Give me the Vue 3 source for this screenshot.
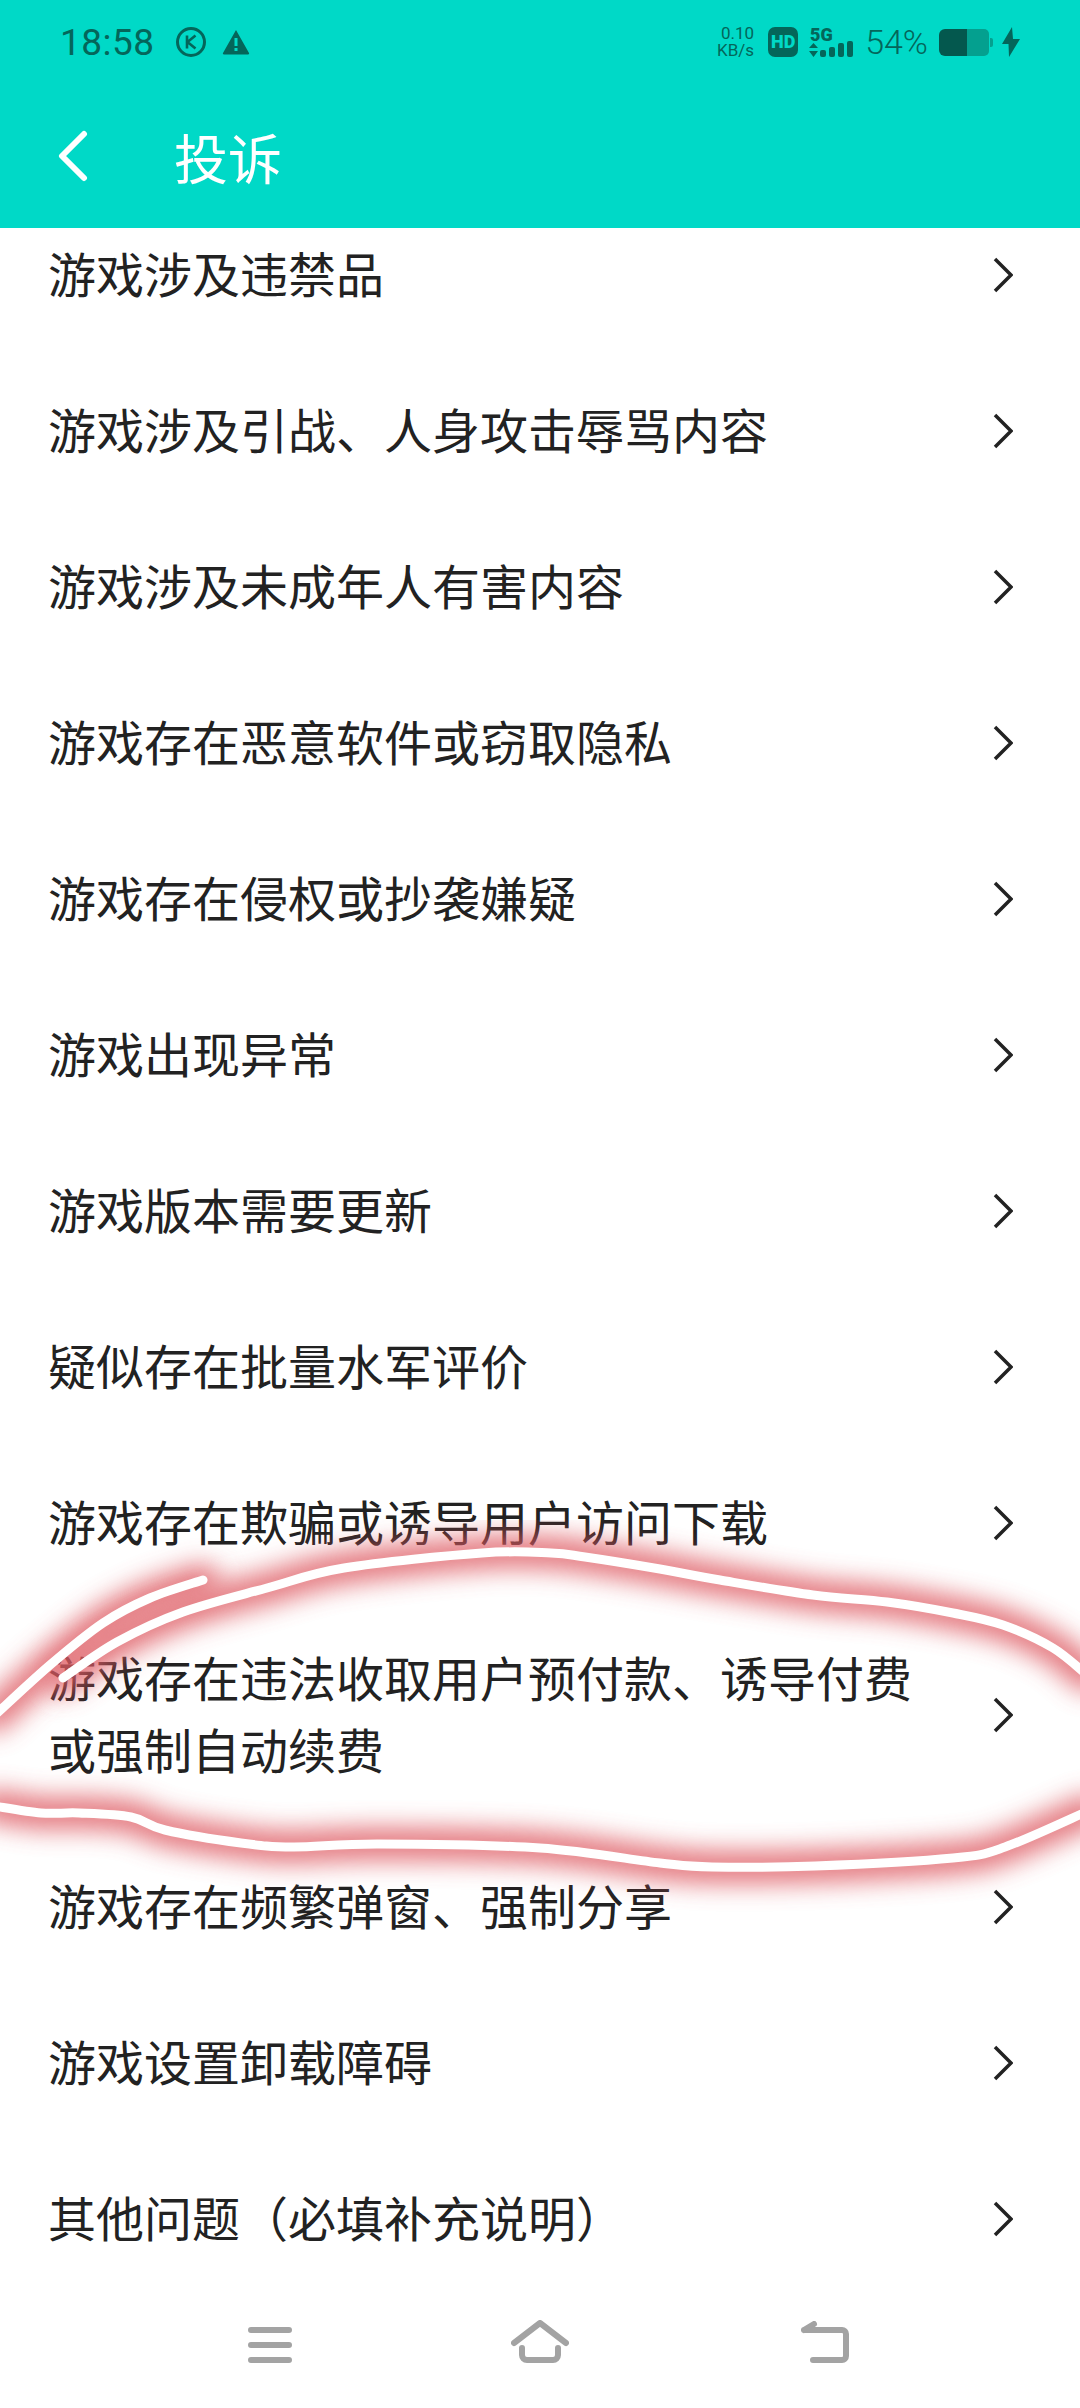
<template>
  <div class="phone">
    <header class="top">
      <div class="status">
        <div class="status-left">
          <span class="clock">18:58</span>
          <svg class="ic-k" width="32" height="32" viewBox="0 0 32 32">
            <circle cx="16" cy="16" r="13.500" fill="none" stroke="#04665a" stroke-width="3" />
            <path d="M12 9.500v13M20.500 9.500 12.500 16l8 6.500" fill="none" stroke="#04665a" stroke-width="2.600" />
          </svg>
          <svg class="ic-warn" width="28" height="25" viewBox="0 0 28 25">
            <path d="M14 0 27 23a1 1 0 0 1-1 1.500H2A1 1 0 0 1 1 23z" fill="#04665a" />
            <path d="M12.500 8h3v8h-3zM12.500 18h3v3h-3z" fill="#00d9c7" />
          </svg>
        </div>
        <div class="status-right">
          <div class="speed"><span>0.10</span><span>KB/s</span></div>
          <div class="hd">HD</div>
          <svg class="sig" width="45" height="30" viewBox="0 0 45 30">
            <text x="1" y="14" class="sig-text">5G</text>
            <path d="M4.500 16 9 21H0zM4.500 30 0 24h9z" fill="#04665a" />
            <rect x="11" y="23" width="6" height="7" rx="2" fill="#04665a" />
            <rect x="20" y="20" width="6" height="10" rx="2" fill="#04665a" />
            <rect x="29" y="16" width="6" height="14" rx="2" fill="#04665a" />
            <rect x="38" y="14" width="6" height="16" rx="2" fill="#04665a" />
          </svg>
          <span class="pct">54%</span>
          <svg class="batt" width="54" height="27" viewBox="0 0 54 27">
            <path d="M28 0h17a5 5 0 0 1 5 5v17a5 5 0 0 1-5 5H28z" fill="#04a08f" />
            <path d="M28 0H6a6 6 0 0 0-6 6v15a6 6 0 0 0 6 6h22z" fill="#04584e" />
            <path d="M51 9h1a2 2 0 0 1 2 2v5a2 2 0 0 1-2 2h-1z" fill="#04a08f" />
          </svg>
          <svg class="bolt" width="18" height="30" viewBox="0 0 18 30">
            <path d="M10 0 0 17h6.500L7 30l11-18h-7z" fill="#04665a" />
          </svg>
        </div>
      </div>
      <div class="bar">
        <svg class="back" width="30" height="52" viewBox="0 0 30 52">
          <path d="M26 4 4 26l22 22" fill="none" stroke="#fff" stroke-width="6" stroke-linecap="round" stroke-linejoin="round" />
        </svg>
        <h1 class="title">投诉</h1>
      </div>
    </header>

    <main class="content">
      <ul class="list">
        <li v-for="item in items" :key="item" class="row">
          <span class="label">{{ item }}</span>
          <svg class="chev" width="20" height="36" viewBox="0 0 20 36">
            <path d="M2 2 18 18 2 34" fill="none" stroke="#222" stroke-width="3.500" />
          </svg>
        </li>
      </ul>

      <nav class="nav">
        <svg width="44" height="36" viewBox="0 0 44 36">
          <path d="M3 3h38M3 18h38M3 33h38" fill="none" stroke="#a3a3a3" stroke-width="6" stroke-linecap="round" />
        </svg>
        <svg class="nav-home" width="58" height="43" viewBox="0 0 58 43">
          <path d="M3 23 29 3l26 20" fill="none" stroke="#a3a3a3" stroke-width="6" stroke-linecap="round" stroke-linejoin="round" />
          <path d="M11 28v7a5 5 0 0 0 5 5h26a5 5 0 0 0 5-5v-7" fill="none" stroke="#a3a3a3" stroke-width="6" stroke-linecap="round" />
        </svg>
        <svg width="48" height="42" viewBox="0 0 48 42">
          <path d="M3 9h38a4 4 0 0 1 4 4v22a4 4 0 0 1-4 4H12M3 9l10-6" fill="none" stroke="#a3a3a3" stroke-width="6" stroke-linecap="round" stroke-linejoin="round" />
        </svg>
      </nav>

      <!-- рукописная обводка поверх списка -->
      <svg class="mark" width="1080" height="400" viewBox="0 1520 1080 400">
        <defs>
          <filter id="glow" filterUnits="userSpaceOnUse" x="-60" y="1480" width="1200" height="480">
            <feGaussianBlur stdDeviation="13" />
          </filter>
        </defs>
        <g fill="none" stroke-linecap="round" stroke-linejoin="round">
          <g stroke="#de5a62" stroke-width="32" opacity="0.85">
            <path v-for="d in strokes" :key="d" :d="d" filter="url(#glow)" />
          </g>
          <g stroke="#fff" stroke-width="9">
            <path v-for="d in strokes" :key="d" :d="d" />
          </g>
        </g>
      </svg>
    </main>
  </div>
</template>

<script setup>
const items = [
  '游戏涉及违禁品',
  '游戏涉及引战、人身攻击辱骂内容',
  '游戏涉及未成年人有害内容',
  '游戏存在恶意软件或窃取隐私',
  '游戏存在侵权或抄袭嫌疑',
  '游戏出现异常',
  '游戏版本需要更新',
  '疑似存在批量水军评价',
  '游戏存在欺骗或诱导用户访问下载',
  '游戏存在违法收取用户预付款、诱导付费或强制自动续费',
  '游戏存在频繁弹窗、强制分享',
  '游戏设置卸载障碍',
  '其他问题（必填补充说明）'
]

// точки сняты с крупных кусков скриншота
const toPath = (pts) => {
  let d = `M${pts[0][0]} ${pts[0][1]}`
  for (let i = 0; i < pts.length - 1; i++) {
    const p0 = pts[i - 1] || pts[i]
    const p1 = pts[i]
    const p2 = pts[i + 1]
    const p3 = pts[i + 2] || p2
    const c1x = p1[0] + (p2[0] - p0[0]) / 6
    const c1y = p1[1] + (p2[1] - p0[1]) / 6
    const c2x = p2[0] - (p3[0] - p1[0]) / 6
    const c2y = p2[1] - (p3[1] - p1[1]) / 6
    d += ` C${c1x} ${c1y} ${c2x} ${c2y} ${p2[0]} ${p2[1]}`
  }
  return d
}

const strokes = [
  // короткий штрих слева
  toPath([[-6, 1716], [50, 1665], [103, 1623], [150, 1598], [203, 1580]]),
  // верх
  toPath([[63, 1678], [117, 1642], [183, 1612], [267, 1588], [344, 1568], [482, 1553], [551, 1553], [585, 1557], [654, 1568], [720, 1580], [813, 1595], [887, 1602], [953, 1613], [1003, 1625], [1053, 1648], [1088, 1676]]),
  // низ
  toPath([[-6, 1806], [41, 1813], [79, 1813], [131, 1817], [165, 1830], [241, 1843], [293, 1847], [379, 1844], [540, 1848], [660, 1863], [712, 1867], [815, 1866], [953, 1858], [1005, 1847], [1088, 1811]])
]
</script>

<style>
html, body {
  margin: 0;
  background: #fff;
}
</style>

<style scoped>
.phone {
  width: 1080px;
  height: 2408px;
  overflow: hidden;
  display: flex;
  flex-direction: column;
  background: #fff;
  font-family: "Noto Sans CJK SC", "Noto Sans", sans-serif;
}

.top {
  height: 228px;
  flex: none;
  background: #00d9c7;
  position: relative;
  z-index: 2;
}

.status {
  height: 84px;
  display: flex;
  justify-content: space-between;
  align-items: center;
  padding: 0 60px;
  color: #04665a;
}

.status-left {
  display: flex;
  align-items: center;
}

.clock {
  font-family: Roboto, sans-serif;
  font-size: 37px;
  letter-spacing: 0.5px;
  margin-right: 20px;
}

.ic-warn {
  margin-left: 15px;
}

.status-right {
  display: flex;
  align-items: center;
}

.speed {
  display: flex;
  flex-direction: column;
  align-items: flex-end;
  font-family: Roboto, sans-serif;
  font-size: 17px;
  line-height: 17px;
  width: 35px;
  margin-right: 14px;
}

.hd {
  width: 30px;
  height: 30px;
  border-radius: 7px;
  background: #04665a;
  color: #00d9c7;
  font-family: Roboto, sans-serif;
  font-weight: 900;
  font-size: 18px;
  line-height: 30px;
  text-align: center;
  margin-right: 11px;
}

.sig-text {
  font-family: Roboto, sans-serif;
  font-weight: 900;
  font-size: 18px;
  fill: #04665a;
}

.pct {
  font-family: Roboto, sans-serif;
  font-weight: 300;
  font-size: 34px;
  margin: 0 11px;
}

.bolt {
  margin-left: 9px;
}

.bar {
  height: 144px;
  display: flex;
  align-items: center;
  padding-left: 58px;
}

.back {
  flex: none;
}

.title {
  margin: 0 0 0 86px;
  font-size: 54px;
  font-weight: 400;
  color: #fff;
}

.content {
  flex: 1;
  position: relative;
  overflow: hidden;
}

.list {
  list-style: none;
  margin: -31px 0 0;
  padding: 0;
}

.row {
  min-height: 156px;
  box-sizing: border-box;
  padding: 45px 67px 45px 48px;
  display: flex;
  align-items: center;
  justify-content: space-between;
}

.label {
  width: 900px;
  margin-top: -6px;
  font-size: 48px;
  line-height: 72px;
  color: #222;
}

.chev {
  flex: none;
}

.nav {
  position: absolute;
  left: 0;
  right: 0;
  bottom: 0;
  height: 128px;
  box-sizing: border-box;
  background: #fff;
  display: flex;
  align-items: flex-end;
  padding: 0 0 45px 248px;
}

.nav-home {
  margin: 0 232px 0 219px;
}

.mark {
  position: absolute;
  left: 0;
  top: 1292px;
  pointer-events: none;
}
</style>
